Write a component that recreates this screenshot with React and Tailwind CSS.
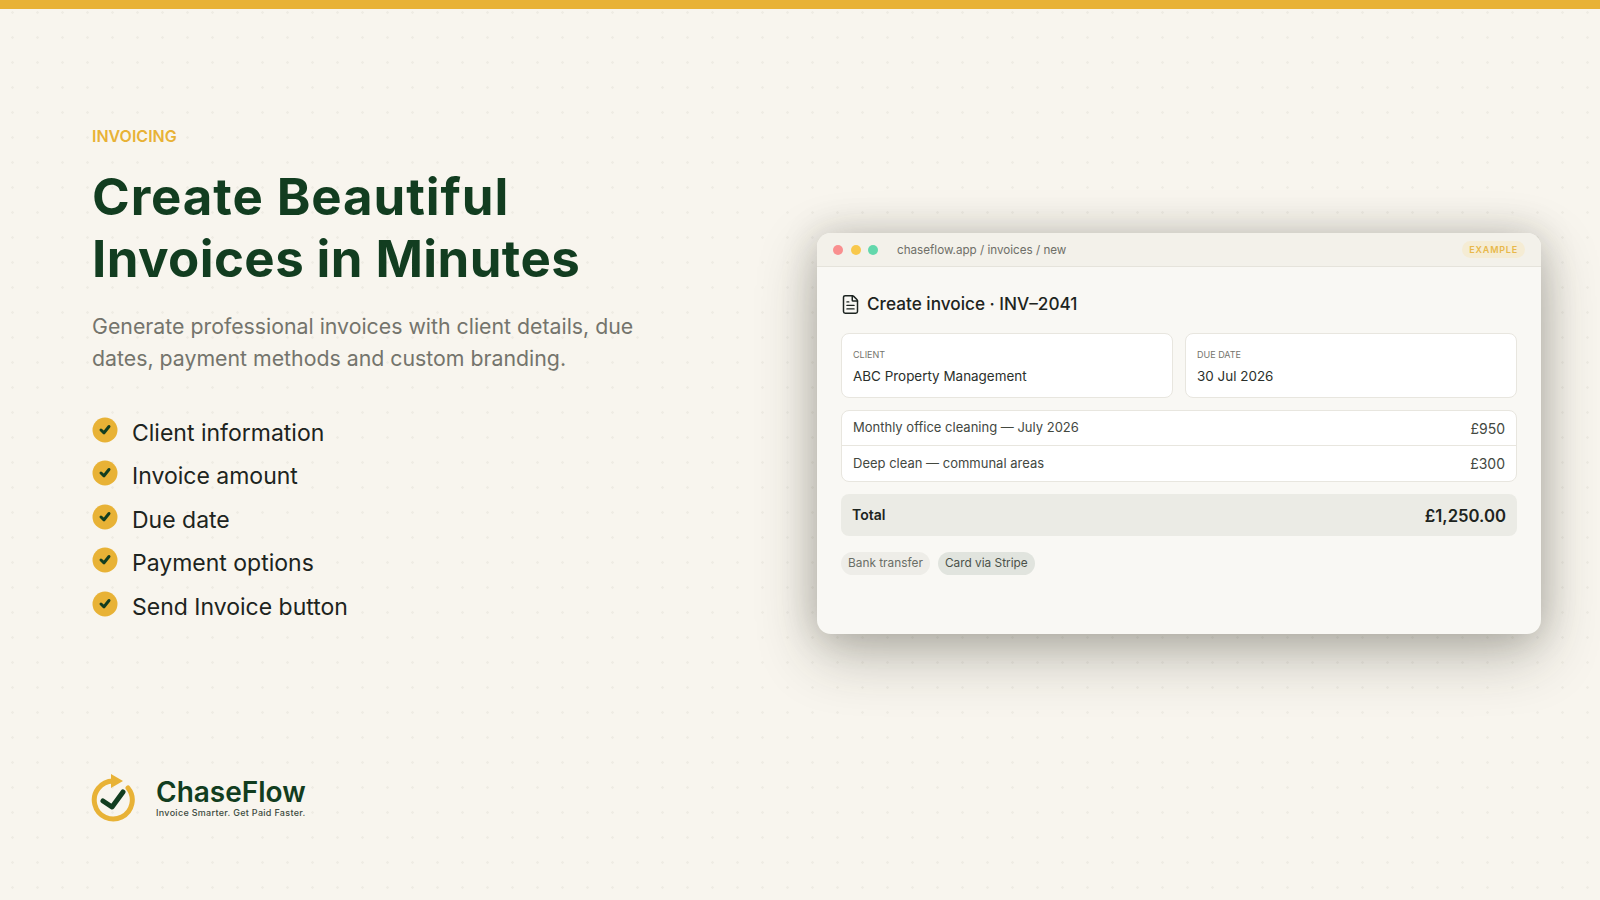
import React from "react";
import { FileText } from "lucide-react";

const features = [
  "Client information",
  "Invoice amount",
  "Due date",
  "Payment options",
  "Send Invoice button",
];

const CheckBadge = () => (
  <svg width="26" height="26" viewBox="0 0 26 26" className="shrink-0">
    <circle cx="13" cy="13" r="12.5" fill="#e8b236" />
    <path d="M9 13l3 2.8 5-6.3" fill="none" stroke="#123d20" strokeWidth="3" strokeLinecap="round" strokeLinejoin="round" />
  </svg>
);

const Logo = () => (
  <svg width="44" height="48" viewBox="0 0 44 48" className="shrink-0 -ml-[1.5px]">
    <path d="M37 14A19 19 0 1 1 22 7" fill="none" stroke="#e8b236" strokeWidth="5" strokeLinecap="round" />
    <polygon points="20,0 32,7 20,14" fill="#e8b236" />
    <path d="M12 27l9 6 11-15" fill="none" stroke="#123d20" strokeWidth="5" strokeLinecap="round" strokeLinejoin="round" />
  </svg>
);

const App = () => {
  return (
    <div className="w-[1600px] h-[900px] overflow-hidden flex flex-col bg-[#f8f5ee] bg-[radial-gradient(circle,#efece4_1px,transparent_1.5px)] bg-[size:25px_25px] font-['Inter','Liberation_Sans',sans-serif]">
      <div className="h-[9px] bg-[#e8b236] shrink-0" />
      <div className="flex flex-1 min-h-0">
        <div className="w-[817px] shrink-0 pl-[92px] pt-[117px] pb-[78px] flex flex-col">
          <p className="text-[16px] leading-[20px] font-semibold text-[#e8b236]">INVOICING</p>
          <h1 className="mt-[20px] text-[51px] leading-[62px] font-bold tracking-[0.4px] text-[#123d20]">
            <span className="tracking-[0.9px]">Create Beautiful</span>
            <br />
            Invoices in Minutes
          </h1>
          <p className="mt-[20px] text-[21.3px] leading-[32px] text-[#74746c]">
            Generate professional invoices with client details, due
            <br />
            dates, payment methods and custom branding.
          </p>
          <ul className="mt-[43px] flex flex-col gap-[17.4px]">
            {features.map((item) => (
              <li key={item} className="flex items-start gap-[14px] h-[26px]">
                <CheckBadge />
                <span className="text-[23px] leading-[32px] text-[#1d2420]">{item}</span>
              </li>
            ))}
          </ul>
          <div className="mt-auto flex items-center gap-[21.5px]">
            <Logo />
            <div>
              <p className="text-[28px] leading-[30px] font-semibold text-[#123d20]">ChaseFlow</p>
              <p className="text-[9px] leading-[12px] font-medium tracking-[0.3px] text-[#3d4a40]">Invoice Smarter. Get Paid Faster.</p>
            </div>
          </div>
        </div>
        <div className="pt-[224px]">
          <div className="w-[724px] h-[401px] rounded-[14px] bg-[#f9f8f4] overflow-hidden shadow-[0_20px_60px_rgba(40,40,25,0.3),0_0_36px_rgba(40,40,25,0.18)]">
            <div className="h-[34px] flex items-center pl-[16px] pr-[16px] bg-[#f3f1ea] border-b border-[#e5e3db]">
              <span className="w-[10px] h-[10px] rounded-full bg-[#f98f8f]" />
              <span className="ml-[7.5px] w-[10px] h-[10px] rounded-full bg-[#f8c84c]" />
              <span className="ml-[7.5px] w-[10px] h-[10px] rounded-full bg-[#63d8ac]" />
              <span className="ml-[19px] text-[11.65px] leading-[18px] text-[#6f6f68]">chaseflow.app / invoices / new</span>
              <span className="ml-auto h-[17px] px-[7px] flex items-center rounded-full bg-[#f5ecd4] text-[9px] font-semibold tracking-[0.8px] text-[#e8b84a]">EXAMPLE</span>
            </div>
            <div className="px-[24px]">
              <div className="mt-[24px] h-[26px] flex items-center gap-[6px] text-[#1d2420]">
                <FileText size={21} strokeWidth={1.7} className="-ml-[1px]" />
                <span className="text-[17.2px] font-medium">Create invoice · INV–2041</span>
              </div>
              <div className="mt-[16px] grid grid-cols-2 gap-[12px]">
                <div className="h-[65px] rounded-[8px] bg-white border border-[#e8e6df] px-[11px] pt-[15px]">
                  <p className="text-[9px] leading-[12px] text-[#74746c]">CLIENT</p>
                  <p className="mt-[5px] text-[13.45px] leading-[20px] text-[#2a2f2b]">ABC Property Management</p>
                </div>
                <div className="h-[65px] rounded-[8px] bg-white border border-[#e8e6df] px-[11px] pt-[15px]">
                  <p className="text-[9px] leading-[12px] text-[#74746c]">DUE DATE</p>
                  <p className="mt-[5px] text-[13.45px] leading-[20px] text-[#2a2f2b]">30 Jul 2026</p>
                </div>
              </div>
              <div className="mt-[12px] rounded-[8px] bg-white border border-[#e8e6df] text-[13px] text-[#43483f]">
                <div className="h-[35px] px-[11px] flex items-center justify-between border-b border-[#e8e6df]">
                  <span>Monthly office cleaning — July 2026</span>
                  <span className="text-[14px]">£950</span>
                </div>
                <div className="h-[35px] px-[11px] flex items-center justify-between">
                  <span>Deep clean — communal areas</span>
                  <span className="text-[14px]">£300</span>
                </div>
              </div>
              <div className="mt-[12px] h-[42px] rounded-[8px] bg-[#ebebe5] px-[11px] flex items-center justify-between text-[#1d2420]">
                <span className="text-[14px] leading-[20px] font-semibold -mt-[1px]">Total</span>
                <span className="text-[16.7px] leading-[20px] font-semibold mt-[1px]">£1,250.00</span>
              </div>
              <div className="mt-[16px] flex gap-[8px] text-[11.85px]">
                <span className="h-[23px] px-[7px] flex items-center rounded-full bg-[#eeede8] text-[#6a6e66]">Bank transfer</span>
                <span className="h-[23px] px-[7px] flex items-center rounded-full bg-[#e1e4de] text-[#4b5149]">Card via Stripe</span>
              </div>
            </div>
          </div>
        </div>
      </div>
    </div>
  );
};

export default App;
